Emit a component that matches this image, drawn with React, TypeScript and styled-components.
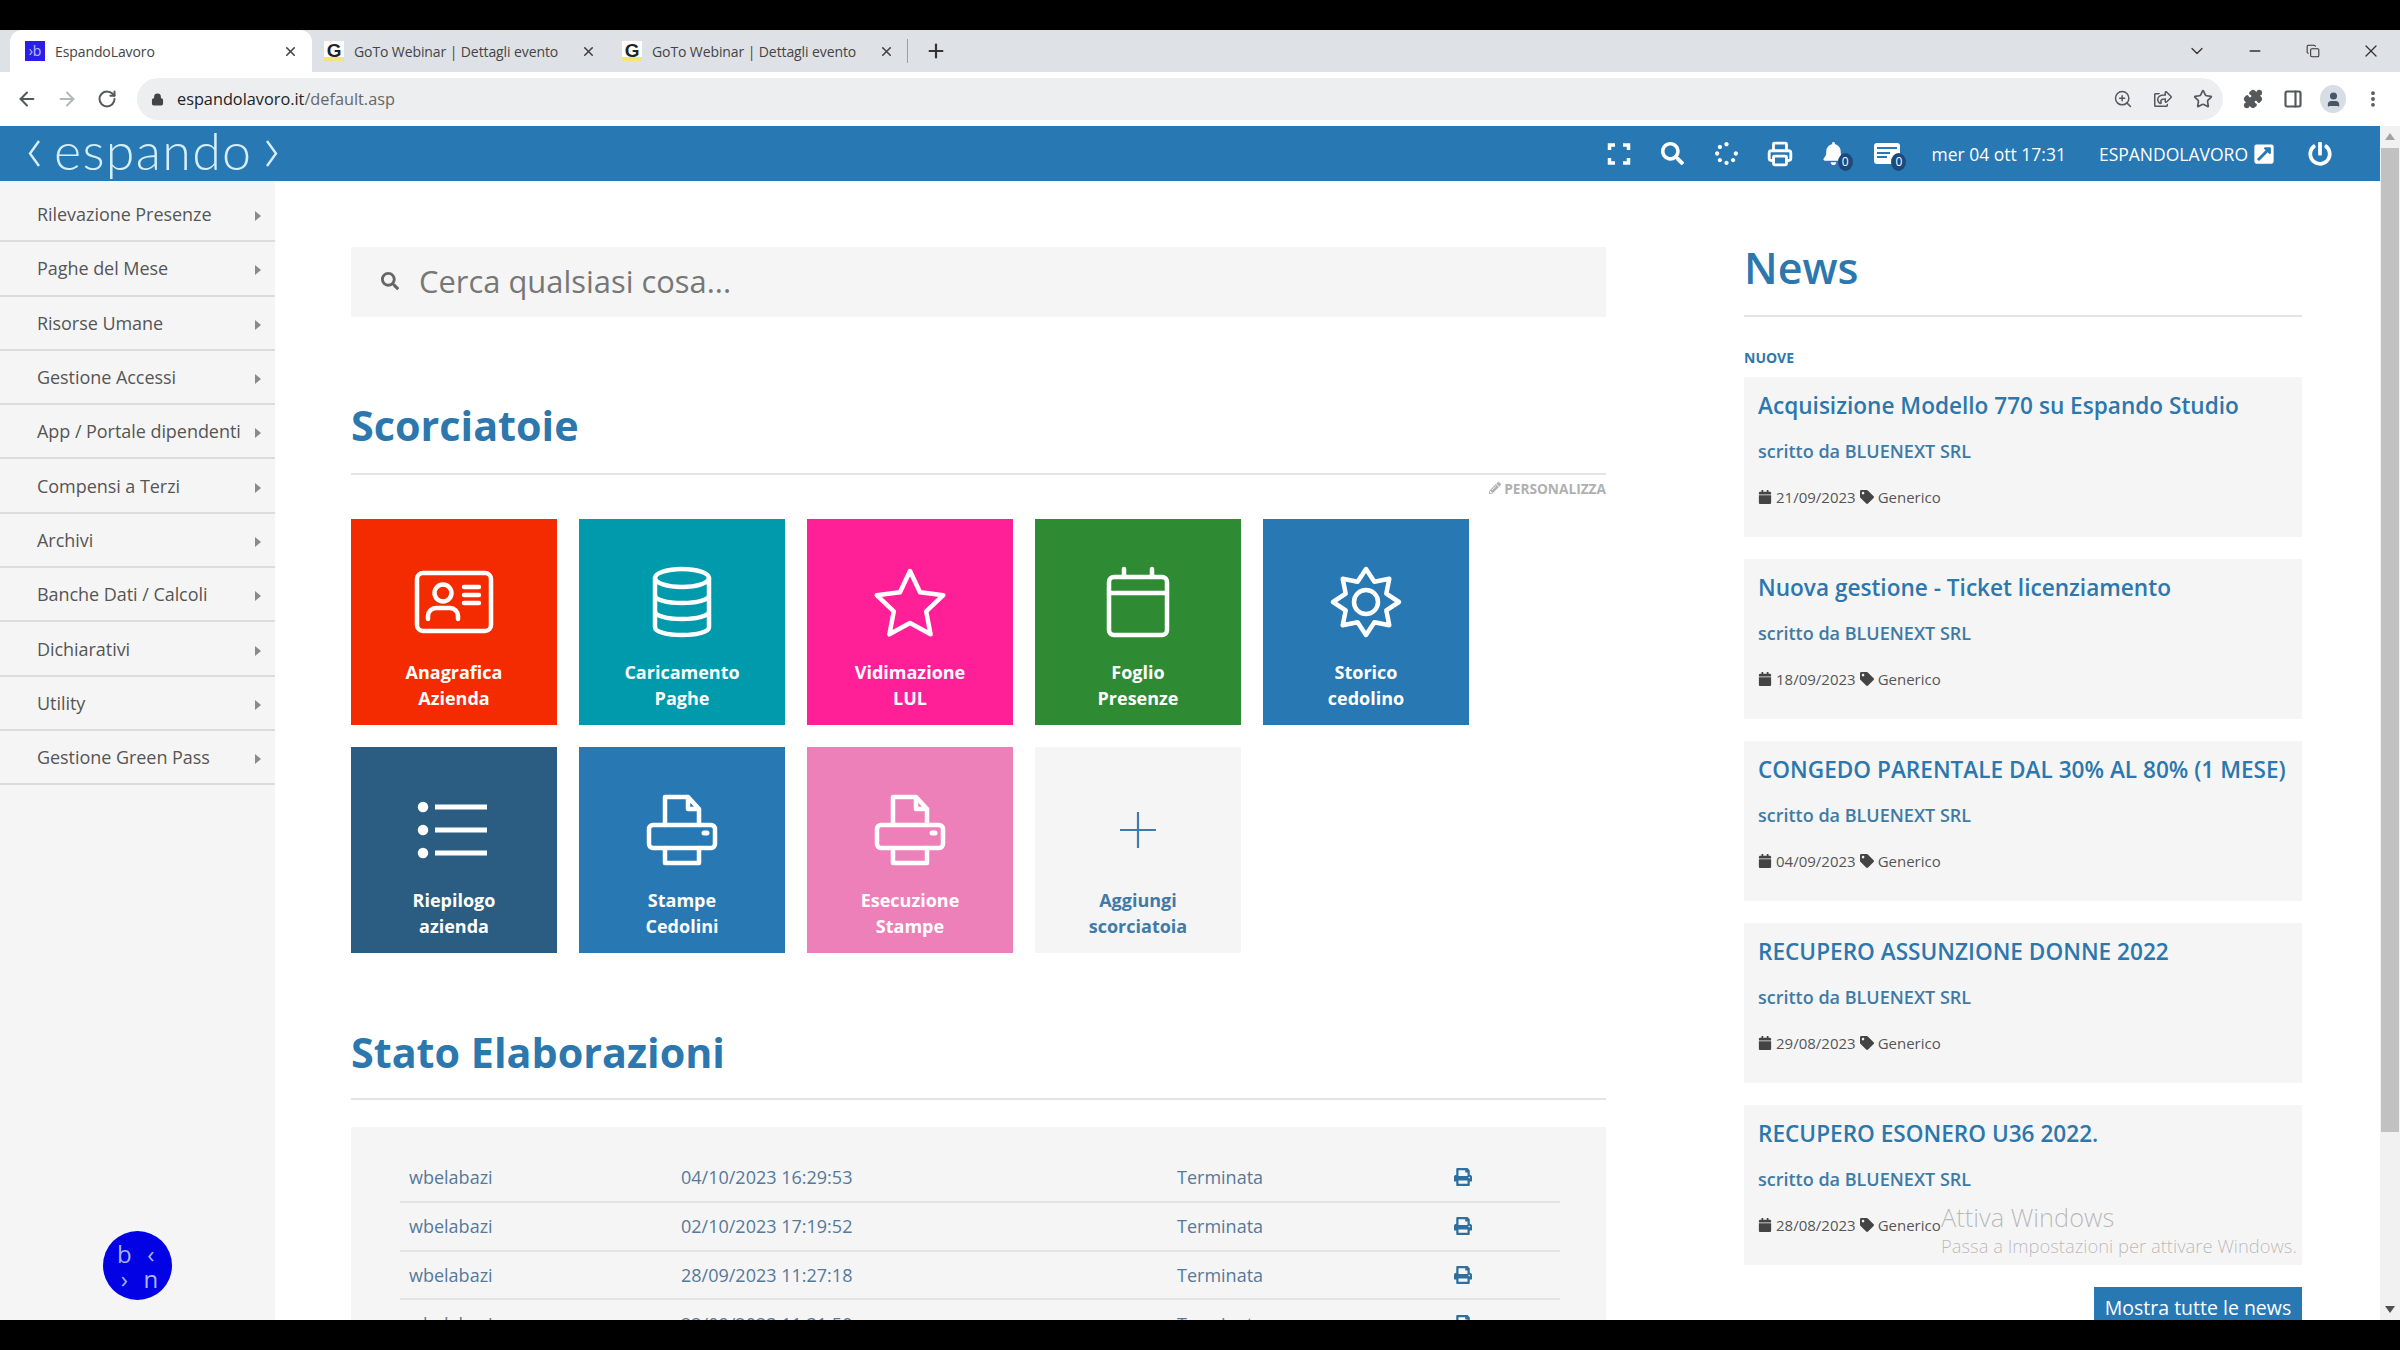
import styled, { createGlobalStyle } from "styled-components";
import {
  ArrowLeft,
  ArrowRight,
  ChevronDown,
  Copy,
  Lock,
  Minus,
  MoreVertical,
  PanelRight,
  Plus,
  Printer,
  Puzzle,
  RotateCw,
  Star,
  User,
  X,
  ZoomIn,
} from "lucide-react";
import {
  FaBell,
  FaCalendar,
  FaExternalLinkSquareAlt,
  FaPencilAlt,
  FaPowerOff,
  FaPrint,
  FaRegShareSquare,
  FaSearch,
  FaSpinner,
  FaTag,
} from "react-icons/fa";

const GlobalStyle = createGlobalStyle`
  html, body { margin: 0; padding: 0; background: #000; }
  * { box-sizing: border-box; }
`;

const Screen = styled.div`
  position: relative;
  width: 2400px;
  height: 1350px;
  overflow: hidden;
  display: flex;
  flex-direction: column;
  background: #000;
  font-family: "Open Sans", "Liberation Sans", sans-serif;
`;

const BlackBar = styled.div<{ $h: number }>`
  height: ${(p) => p.$h}px;
  flex: none;
  background: #000;
`;

/* browser chrome */
const TabStrip = styled.div`
  height: 42px;
  flex: none;
  display: flex;
  align-items: stretch;
  padding-left: 10px;
  background: #dee1e6;
`;

const Tab = styled.div<{ $active?: boolean; $w: number; $sep?: boolean }>`
  width: ${(p) => p.$w}px;
  display: flex;
  align-items: center;
  padding: 0 14px 0 ${(p) => (p.$active ? 15 : 12)}px;
  gap: 10px;
  font-size: 14px;
  letter-spacing: -0.1px;
  white-space: nowrap;
  color: #444;
  background: ${(p) => (p.$active ? "#fff" : "transparent")};
  border-radius: 12px 12px 0 0;
  position: relative;
  svg { margin-left: auto; flex: none; }
  ${(p) =>
    p.$sep
      ? `&::after { content: ""; position: absolute; right: 0; top: 9px; bottom: 9px; width: 1px; background: #9aa0a6; }`
      : ""}
`;

const Favicon = styled.span`
  width: 20px;
  height: 20px;
  flex: none;
  background: #2a1ee8;
  color: #b9c4ff;
  font-size: 14px;
  line-height: 20px;
  text-align: center;
`;

const GoogleIcon = styled.span`
  width: 20px;
  height: 20px;
  flex: none;
  font: 700 19px/20px "Liberation Sans", sans-serif;
  color: #222;
  text-align: center;
  background: linear-gradient(to top, #f4e27a 0 4px, #fff 4px);
`;

const NewTab = styled.div`
  width: 36px;
  margin-left: 10px;
  display: flex;
  align-items: center;
  justify-content: center;
  color: #333;
`;

const WindowButtons = styled.div`
  margin-left: auto;
  display: flex;
`;

const WindowButton = styled.div`
  width: 58px;
  display: flex;
  align-items: center;
  justify-content: center;
  color: #333;
`;

const Toolbar = styled.div`
  height: 54px;
  flex: none;
  display: flex;
  align-items: flex-start;
  padding: 6px 7px 0;
  background: #fff;
`;

const ToolButton = styled.div<{ $muted?: boolean }>`
  width: 40px;
  height: 42px;
  flex: none;
  display: flex;
  align-items: center;
  justify-content: center;
  color: ${(p) => (p.$muted ? "#b4b7ba" : "#55585c")};
`;

const Avatar = styled.div`
  width: 26px;
  height: 28px;
  border-radius: 50%;
  display: flex;
  align-items: center;
  justify-content: center;
  background: #d7dde5;
  color: #4a5568;
`;

const Omnibox = styled.div`
  flex: 1;
  height: 42px;
  margin: 0 10px;
  display: flex;
  align-items: center;
  padding-left: 14px;
  border-radius: 21px;
  background: #eceef0;
  font-size: 16.3px;
  color: #222;
  span { color: #666; }
`;

const Address = styled.div`
  margin-left: 13px;
  margin-right: auto;
`;

/* page */
const Viewport = styled.div`
  flex: 1;
  min-height: 0;
  display: flex;
`;

const Page = styled.div`
  flex: 1;
  min-width: 0;
  display: flex;
  flex-direction: column;
  background: #fff;
`;

const Header = styled.header`
  height: 55px;
  flex: none;
  display: flex;
  align-items: center;
  padding: 0 48px 0 28px;
  background: #2878b4;
  color: #fff;
`;

const Logo = styled.div`
  display: flex;
  align-items: center;
  gap: 13px;
  color: #d5eef7;
  font: 300 52px/55px Lato, sans-serif;
  letter-spacing: 1.3px;
  span { position: relative; top: -3px; }
`;

const HeaderTools = styled.div`
  margin-left: auto;
  display: flex;
  align-items: center;
  font-size: 17.5px;
`;

const HeaderIcon = styled.div`
  position: relative;
  width: 53.6px;
  height: 55px;
  display: flex;
  align-items: center;
  justify-content: center;
`;

const CountBadge = styled.span`
  position: absolute;
  left: 31px;
  top: 27px;
  width: 15px;
  height: 18px;
  border-radius: 50%;
  background: #1c4a7e;
  color: #fff;
  font-size: 12px;
  line-height: 18px;
  text-align: center;
`;

const DateText = styled.div`
  margin-left: 17.5px;
  white-space: nowrap;
`;

const UserName = styled.div`
  margin-left: 33px;
  display: flex;
  align-items: center;
  gap: 5px;
  white-space: nowrap;
`;

const PowerButton = styled.div`
  margin-left: 33px;
  display: flex;
`;

const Body = styled.div`
  flex: 1;
  min-height: 0;
  overflow: hidden;
  display: flex;
`;

const Sidebar = styled.nav`
  position: relative;
  width: 275px;
  flex: none;
  padding-top: 7px;
  background: #f5f5f5;
`;

const MenuItem = styled.div`
  height: 54.3px;
  display: flex;
  align-items: center;
  justify-content: space-between;
  padding: 0 14px 0 37px;
  border-bottom: 2px solid #dcdcdc;
  color: #555;
  font-size: 18px;
  letter-spacing: -0.05px;
  white-space: nowrap;
  &::after {
    content: "";
    border-left: 6px solid #8a8a8a;
    border-top: 5.5px solid transparent;
    border-bottom: 5.5px solid transparent;
    margin-top: 4px;
  }
`;

const ChatBubble = styled.div`
  position: absolute;
  left: 103px;
  bottom: 20px;
  width: 69px;
  height: 69px;
  border-radius: 50%;
  background: #0202e4;
  color: #a9b4ff;
  display: grid;
  grid-template-columns: 1fr 1fr;
  padding: 10px 8px;
  font-size: 24px;
  line-height: 25px;
  text-align: center;
`;

const Main = styled.main`
  width: 1331px;
  flex: none;
  padding: 66px 0 0 76px;
`;

const SearchBar = styled.div`
  height: 70px;
  display: flex;
  align-items: center;
  gap: 20px;
  padding-left: 30px;
  padding-bottom: 2px;
  background: #f5f5f5;
  color: #777;
  font-size: 30.9px;
  svg { color: #666; }
`;

const SectionTitle = styled.h2<{ $top: number; $bottom: number }>`
  margin: ${(p) => p.$top}px 0 0;
  padding-bottom: ${(p) => p.$bottom}px;
  border-bottom: 2px solid #e4e4e4;
  font-size: 41.3px;
  line-height: 54px;
  font-weight: 700;
  color: #2c77ad;
`;

const Personalize = styled.div`
  display: flex;
  justify-content: flex-end;
  align-items: center;
  gap: 3px;
  height: 18px;
  margin: 4px 0 22px;
  color: #b0b0b0;
  font-size: 13.7px;
  font-weight: 700;
`;

const TileGrid = styled.div`
  display: grid;
  grid-template-columns: repeat(5, 206px);
  grid-auto-rows: 206px;
  gap: 22px;
`;

const Tile = styled.div<{ $bg: string; $fg?: string }>`
  display: flex;
  flex-direction: column;
  align-items: center;
  padding-top: 43px;
  background: ${(p) => p.$bg};
  color: ${(p) => p.$fg ?? "#fff"};
`;

const TileLabel = styled.div`
  margin-top: 18px;
  font-size: 18px;
  line-height: 25.7px;
  font-weight: 700;
  text-align: center;
`;

const TileIcon = styled.svg.attrs({ viewBox: "0 0 80 80", width: 80, height: 80 })`
  flex: none;
  fill: none;
  stroke: currentColor;
  stroke-width: 4.5;
  stroke-linejoin: round;
  stroke-linecap: round;
`;

const JobsPanel = styled.div`
  margin-top: 27px;
  padding: 27px 46px 40px 49px;
  background: #f5f5f5;
`;

const JobRow = styled.div`
  height: 48.8px;
  display: grid;
  grid-template-columns: 281px 496px 277px 20px;
  align-items: center;
  border-bottom: 2px solid #e4e4e4;
  color: #55799a;
  font-size: 18px;
  svg { color: #2f6f9f; }
  & > :first-child { padding-left: 9px; }
`;

const NewsColumn = styled.aside`
  width: 558px;
  flex: none;
  margin-left: 138px;
  padding-top: 57px;
`;

const NewsTitle = styled.h2`
  margin: 0;
  padding-bottom: 17px;
  border-bottom: 2px solid #e4e4e4;
  font-size: 43px;
  line-height: 60px;
  font-weight: 600;
  color: #2c77ad;
`;

const NewLabel = styled.div`
  margin: 32px 0 10px;
  color: #2c77ad;
  font-size: 14px;
  line-height: 18px;
  font-weight: 700;
`;

const NewsCards = styled.div`
  display: flex;
  flex-direction: column;
  gap: 22px;
`;

const NewsCard = styled.article`
  height: 160px;
  padding: 14px 13px 0 14px;
  background: #f5f5f5;
`;

const CardTitle = styled.div`
  font-size: 22.6px;
  line-height: 30px;
  font-weight: 600;
  color: #2c77ad;
  white-space: nowrap;
`;

const CardAuthor = styled.div`
  margin-top: 15px;
  font-size: 18px;
  line-height: 30px;
  font-weight: 600;
  color: #3f7aa6;
`;

const CardMeta = styled.div`
  margin-top: 16px;
  display: flex;
  align-items: center;
  gap: 4px;
  font-size: 15px;
  line-height: 30px;
  color: #555;
  svg { color: #444; flex: none; }
`;

const ShowAll = styled.div`
  width: 208px;
  height: 44px;
  margin: 22px 0 0 auto;
  padding-top: 7px;
  background: #2878b4;
  color: #fff;
  font-size: 19.5px;
  line-height: 28px;
  text-align: center;
`;

const Scrollbar = styled.div`
  width: 20px;
  flex: none;
  display: flex;
  flex-direction: column;
  align-items: center;
  background: #f1f1f1;
`;

const ScrollArrow = styled.div<{ $up?: boolean }>`
  flex: none;
  width: 0;
  height: 0;
  margin: ${(p) => (p.$up ? "7px 0 8px" : "auto 0 7px")};
  border-left: 5px solid transparent;
  border-right: 5px solid transparent;
  ${(p) => (p.$up ? "border-bottom: 7px solid #a3a3a3;" : "border-top: 7px solid #505050;")}
`;

const ScrollThumb = styled.div`
  width: 18px;
  height: 984px;
  flex: none;
  background: #c1c1c1;
`;

const Watermark = styled.div`
  position: absolute;
  left: 1941px;
  top: 1200px;
  color: rgba(110, 110, 110, 0.45);
  font-weight: 300;
  pointer-events: none;
`;

const WatermarkTitle = styled.div`
  font-size: 25.4px;
  line-height: 34px;
`;

const WatermarkText = styled.div`
  font-size: 18.4px;
  line-height: 24px;
`;

const menu = [
  "Rilevazione Presenze",
  "Paghe del Mese",
  "Risorse Umane",
  "Gestione Accessi",
  "App / Portale dipendenti",
  "Compensi a Terzi",
  "Archivi",
  "Banche Dati / Calcoli",
  "Dichiarativi",
  "Utility",
  "Gestione Green Pass",
];

const jobs = [
  ["wbelabazi", "04/10/2023 16:29:53"],
  ["wbelabazi", "02/10/2023 17:19:52"],
  ["wbelabazi", "28/09/2023 11:27:18"],
  ["wbelabazi", "22/09/2023 11:31:50"],
];

const news = [
  ["Acquisizione Modello 770 su Espando Studio", "21/09/2023"],
  ["Nuova gestione - Ticket licenziamento", "18/09/2023"],
  ["CONGEDO PARENTALE DAL 30% AL 80% (1 MESE)", "04/09/2023"],
  ["RECUPERO ASSUNZIONE DONNE 2022", "29/08/2023"],
  ["RECUPERO ESONERO U36 2022.", "28/08/2023"],
];

const starPoints = (n: number, outer: number, inner: number, cy = 40) =>
  Array.from({ length: n * 2 }, (_, i) => {
    const r = i % 2 === 0 ? outer : inner;
    const a = (Math.PI * i) / n - Math.PI / 2;
    return `${(40 + r * Math.cos(a)).toFixed(1)},${(cy + r * Math.sin(a)).toFixed(1)}`;
  }).join(" ");

const CardIcon = () => (
  <TileIcon>
    <rect x="3" y="11" width="74" height="58" rx="6" />
    <circle cx="29" cy="31" r="8.5" />
    <path d="M14 57v-3a8 8 0 0 1 8-8h14a8 8 0 0 1 8 8v3M50 25h15M50 33h15M50 41h15" />
  </TileIcon>
);

const DatabaseIcon = () => (
  <TileIcon>
    <ellipse cx="40" cy="16" rx="27" ry="9" />
    <path d="M13 16v49c0 5 12 8 27 8s27-3 27-8V16M13 33c0 5 12 8 27 8s27-3 27-8M13 49c0 5 12 8 27 8s27-3 27-8" />
  </TileIcon>
);

const StarIcon = () => (
  <TileIcon>
    <polygon points={starPoints(5, 35, 17, 44)} />
  </TileIcon>
);

const CalendarIcon = () => (
  <TileIcon>
    <rect x="11" y="15" width="58" height="58" rx="5" />
    <path d="M11 31h58M26 7v8M54 7v8" />
  </TileIcon>
);

const SunIcon = () => (
  <TileIcon>
    <polygon points={starPoints(8, 33, 22)} />
    <circle cx="40" cy="40" r="12" />
  </TileIcon>
);

const ListIcon = () => (
  <TileIcon>
    <path d="M21 17h52M21 40h52M21 63h52" strokeLinecap="butt" strokeWidth="5" />
    <circle cx="9" cy="17" r="3" fill="currentColor" />
    <circle cx="9" cy="40" r="3" fill="currentColor" />
    <circle cx="9" cy="63" r="3" fill="currentColor" />
  </TileIcon>
);

const PrinterIcon = () => (
  <TileIcon>
    <path d="M23 35V7h23l11 12v16M46 7v12h11" />
    <rect x="7" y="35" width="66" height="23" rx="4" />
    <path d="M23 58v15h34V58" />
    <path d="M62 43h3" strokeWidth="5" />
  </TileIcon>
);

const PlusIcon = () => (
  <TileIcon>
    <path d="M40 22v36M22 40h36" strokeLinecap="butt" strokeWidth="2.2" />
  </TileIcon>
);

const tiles = [
  { bg: "#f52b00", icon: <CardIcon />, label: ["Anagrafica", "Azienda"] },
  { bg: "#009aad", icon: <DatabaseIcon />, label: ["Caricamento", "Paghe"] },
  { bg: "#ff2098", icon: <StarIcon />, label: ["Vidimazione", "LUL"] },
  { bg: "#2e8b34", icon: <CalendarIcon />, label: ["Foglio", "Presenze"] },
  { bg: "#2878b4", icon: <SunIcon />, label: ["Storico", "cedolino"] },
  { bg: "#2b5d82", icon: <ListIcon />, label: ["Riepilogo", "azienda"] },
  { bg: "#2878b4", icon: <PrinterIcon />, label: ["Stampe", "Cedolini"] },
  { bg: "#ee80b9", icon: <PrinterIcon />, label: ["Esecuzione", "Stampe"] },
  { bg: "#f5f5f5", fg: "#3f7aa9", icon: <PlusIcon />, label: ["Aggiungi", "scorciatoia"] },
];

const FullscreenIcon = () => (
  <svg width="24" height="24" viewBox="0 0 24 24" fill="none" stroke="currentColor" strokeWidth="3.5">
    <path d="M8 3H2.5v5M16 3h5.5v5M8 21H2.5v-5M16 21h5.5v-5" />
  </svg>
);

const NewsIcon = () => (
  <svg width="26" height="22" viewBox="0 0 26 22">
    <rect width="26" height="21" rx="3" fill="currentColor" />
    <path d="M3 5h20M3 10h13M3 14h10" stroke="#2878b4" strokeWidth="2" />
  </svg>
);

const LogoChevron = ({ right }: { right?: boolean }) => (
  <svg width="13" height="27" viewBox="0 0 13 27" fill="none" stroke="currentColor" strokeWidth="2.4">
    <path d={right ? "M2 1l9 12.5L2 26" : "M11 1L2 13.5 11 26"} />
  </svg>
);

export default function App() {
  return (
    <Screen>
      <GlobalStyle />
      <BlackBar $h={30} />
      <TabStrip>
        <Tab $active $w={302}>
          <Favicon>›b</Favicon>
          EspandoLavoro
          <X size={15} strokeWidth={2.5} />
        </Tab>
        <Tab $w={298}>
          <GoogleIcon>G</GoogleIcon>
          GoTo Webinar | Dettagli evento
          <X size={15} strokeWidth={2.5} />
        </Tab>
        <Tab $w={298} $sep>
          <GoogleIcon>G</GoogleIcon>
          GoTo Webinar | Dettagli evento
          <X size={15} strokeWidth={2.5} />
        </Tab>
        <NewTab>
          <Plus size={22} strokeWidth={2.4} />
        </NewTab>
        <WindowButtons>
          <WindowButton>
            <ChevronDown size={20} strokeWidth={1.5} />
          </WindowButton>
          <WindowButton>
            <Minus size={16} strokeWidth={2.5} />
          </WindowButton>
          <WindowButton>
            <Copy size={14} strokeWidth={1.8} />
          </WindowButton>
          <WindowButton>
            <X size={20} strokeWidth={1.5} />
          </WindowButton>
        </WindowButtons>
      </TabStrip>
      <Toolbar>
        <ToolButton>
          <ArrowLeft size={22} strokeWidth={2.2} />
        </ToolButton>
        <ToolButton $muted>
          <ArrowRight size={22} strokeWidth={2.2} />
        </ToolButton>
        <ToolButton>
          <RotateCw size={20} strokeWidth={2.4} />
        </ToolButton>
        <Omnibox>
          <Lock size={13} fill="#444" color="#444" strokeWidth={2.5} />
          <Address>
            espandolavoro.it<span>/default.asp</span>
          </Address>
          <ToolButton>
            <ZoomIn size={20} strokeWidth={1.8} />
          </ToolButton>
          <ToolButton>
            <FaRegShareSquare size={18} />
          </ToolButton>
          <ToolButton>
            <Star size={20} strokeWidth={2} />
          </ToolButton>
        </Omnibox>
        <ToolButton>
          <Puzzle size={20} fill="#55585c" />
        </ToolButton>
        <ToolButton>
          <PanelRight size={20} strokeWidth={2.6} />
        </ToolButton>
        <ToolButton>
          <Avatar>
            <User size={17} fill="#4a5568" />
          </Avatar>
        </ToolButton>
        <ToolButton>
          <MoreVertical size={20} strokeWidth={2.6} />
        </ToolButton>
      </Toolbar>
      <Viewport>
        <Page>
          <Header>
            <Logo>
              <LogoChevron />
              <span>espando</span>
              <LogoChevron right />
            </Logo>
            <HeaderTools>
              <HeaderIcon>
                <FullscreenIcon />
              </HeaderIcon>
              <HeaderIcon>
                <FaSearch size={23} />
              </HeaderIcon>
              <HeaderIcon>
                <FaSpinner size={23} />
              </HeaderIcon>
              <HeaderIcon>
                <Printer size={26} strokeWidth={2.6} />
              </HeaderIcon>
              <HeaderIcon>
                <FaBell size={23} />
                <CountBadge>0</CountBadge>
              </HeaderIcon>
              <HeaderIcon>
                <NewsIcon />
                <CountBadge>0</CountBadge>
              </HeaderIcon>
              <DateText>mer 04 ott 17:31</DateText>
              <UserName>
                ESPANDOLAVORO
                <FaExternalLinkSquareAlt size={22} />
              </UserName>
              <PowerButton>
                <FaPowerOff size={24} />
              </PowerButton>
            </HeaderTools>
          </Header>
          <Body>
            <Sidebar>
              {menu.map((item) => (
                <MenuItem key={item}>{item}</MenuItem>
              ))}
              <ChatBubble>
                <span>b</span>
                <span>‹</span>
                <span>›</span>
                <span>n</span>
              </ChatBubble>
            </Sidebar>
            <Main>
              <SearchBar>
                <FaSearch size={18} />
                Cerca qualsiasi cosa...
              </SearchBar>
              <SectionTitle $top={81} $bottom={21}>
                Scorciatoie
              </SectionTitle>
              <Personalize>
                <FaPencilAlt size={12} />
                PERSONALIZZA
              </Personalize>
              <TileGrid>
                {tiles.map((tile) => (
                  <Tile key={tile.label[0]} $bg={tile.bg} $fg={tile.fg}>
                    {tile.icon}
                    <TileLabel>
                      {tile.label[0]}
                      <br />
                      {tile.label[1]}
                    </TileLabel>
                  </Tile>
                ))}
              </TileGrid>
              <SectionTitle $top={72} $bottom={19}>
                Stato Elaborazioni
              </SectionTitle>
              <JobsPanel>
                {jobs.map(([name, date]) => (
                  <JobRow key={date}>
                    <span>{name}</span>
                    <span>{date}</span>
                    <span>Terminata</span>
                    <FaPrint size={18} />
                  </JobRow>
                ))}
              </JobsPanel>
            </Main>
            <NewsColumn>
              <NewsTitle>News</NewsTitle>
              <NewLabel>NUOVE</NewLabel>
              <NewsCards>
                {news.map(([title, date]) => (
                  <NewsCard key={title}>
                    <CardTitle>{title}</CardTitle>
                    <CardAuthor>scritto da BLUENEXT SRL</CardAuthor>
                    <CardMeta>
                      <FaCalendar size={14} />
                      {date}
                      <FaTag size={14} />
                      Generico
                    </CardMeta>
                  </NewsCard>
                ))}
              </NewsCards>
              <ShowAll>Mostra tutte le news</ShowAll>
            </NewsColumn>
          </Body>
        </Page>
        <Scrollbar>
          <ScrollArrow $up />
          <ScrollThumb />
          <ScrollArrow />
        </Scrollbar>
      </Viewport>
      <BlackBar $h={30} />
      <Watermark>
        <WatermarkTitle>Attiva Windows</WatermarkTitle>
        <WatermarkText>Passa a Impostazioni per attivare Windows.</WatermarkText>
      </Watermark>
    </Screen>
  );
}
